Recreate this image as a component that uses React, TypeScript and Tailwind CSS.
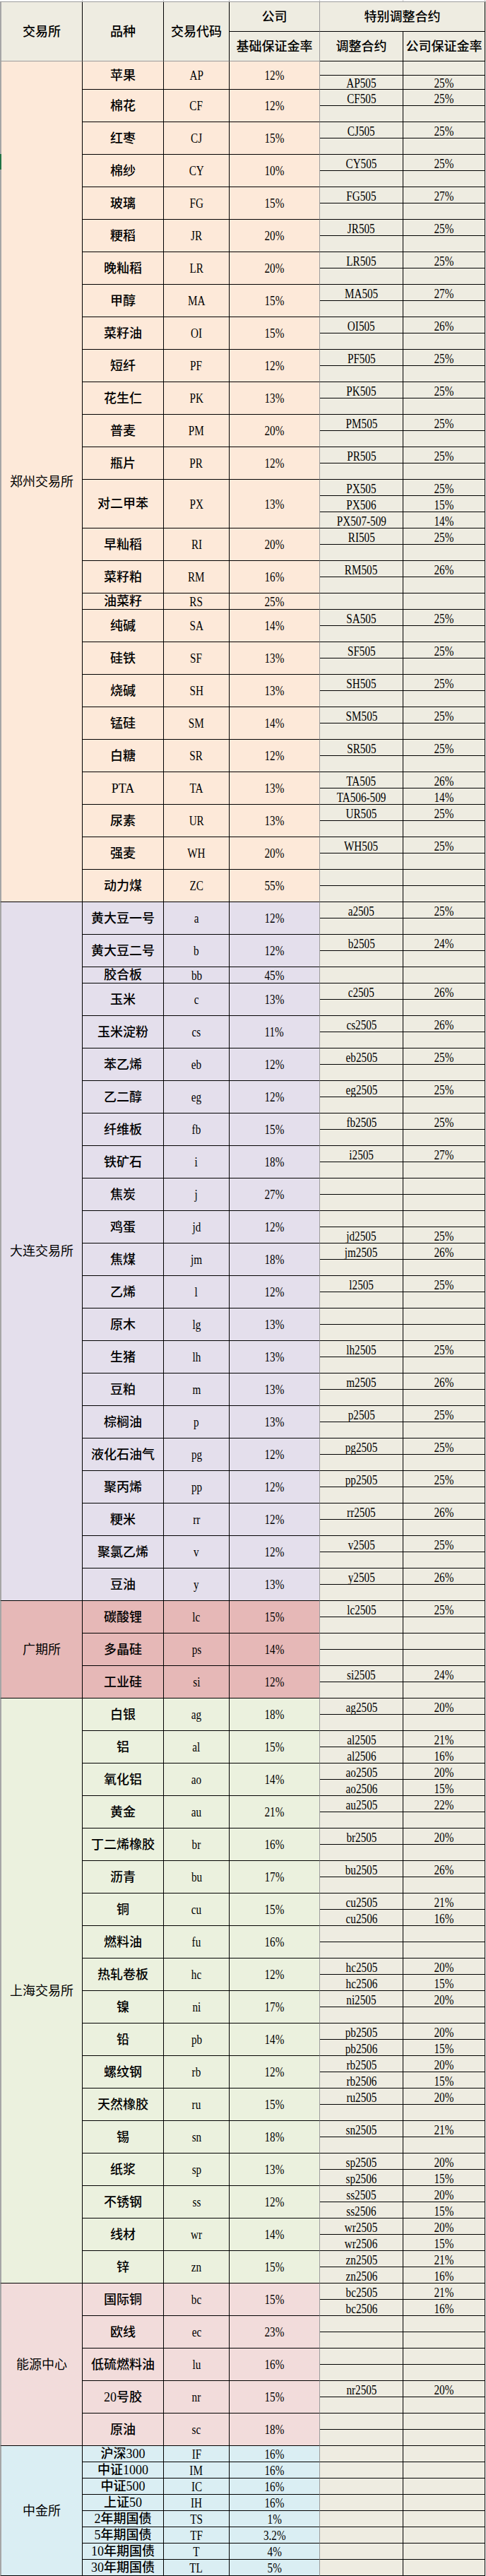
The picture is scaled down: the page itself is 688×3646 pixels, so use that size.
import React from 'react';

type Sub = [string, string] | null;
type Product = { name: string; code: string; rate: string; subs: Sub[]; short?: boolean };
type Group = { label: string; bg: string; products: Product[] };

const p = (name: string, code: string, rate: string, subs: Sub[], short = false): Product => ({
  name,
  code,
  rate,
  subs,
  short,
});

const groups: Group[] = [
  {
    label: '郑州交易所',
    bg: 'bg-[#fde9d9]',
    products: [
      p('苹果', 'AP', '12%', [null, ['AP505', '25%']], true),
      p('棉花', 'CF', '12%', [['CF505', '25%'], null]),
      p('红枣', 'CJ', '15%', [['CJ505', '25%'], null]),
      p('棉纱', 'CY', '10%', [['CY505', '25%'], null]),
      p('玻璃', 'FG', '15%', [['FG505', '27%'], null]),
      p('粳稻', 'JR', '20%', [['JR505', '25%'], null]),
      p('晚籼稻', 'LR', '20%', [['LR505', '25%'], null]),
      p('甲醇', 'MA', '15%', [['MA505', '27%'], null]),
      p('菜籽油', 'OI', '15%', [['OI505', '26%'], null]),
      p('短纤', 'PF', '12%', [['PF505', '25%'], null]),
      p('花生仁', 'PK', '13%', [['PK505', '25%'], null]),
      p('普麦', 'PM', '20%', [['PM505', '25%'], null]),
      p('瓶片', 'PR', '12%', [['PR505', '25%'], null]),
      p('对二甲苯', 'PX', '13%', [['PX505', '25%'], ['PX506', '15%'], ['PX507-509', '14%']]),
      p('早籼稻', 'RI', '20%', [['RI505', '25%'], null]),
      p('菜籽粕', 'RM', '16%', [['RM505', '26%'], null]),
      p('油菜籽', 'RS', '25%', [null]),
      p('纯碱', 'SA', '14%', [['SA505', '25%'], null]),
      p('硅铁', 'SF', '13%', [['SF505', '25%'], null]),
      p('烧碱', 'SH', '13%', [['SH505', '25%'], null]),
      p('锰硅', 'SM', '14%', [['SM505', '25%'], null]),
      p('白糖', 'SR', '12%', [['SR505', '25%'], null]),
      p('PTA', 'TA', '13%', [['TA505', '26%'], ['TA506-509', '14%']]),
      p('尿素', 'UR', '13%', [['UR505', '25%'], null]),
      p('强麦', 'WH', '20%', [['WH505', '25%'], null]),
      p('动力煤', 'ZC', '55%', [null, null]),
    ],
  },
  {
    label: '大连交易所',
    bg: 'bg-[#e4dfec]',
    products: [
      p('黄大豆一号', 'a', '12%', [['a2505', '25%'], null]),
      p('黄大豆二号', 'b', '12%', [['b2505', '24%'], null]),
      p('胶合板', 'bb', '45%', [null]),
      p('玉米', 'c', '13%', [['c2505', '26%'], null]),
      p('玉米淀粉', 'cs', '11%', [['cs2505', '26%'], null]),
      p('苯乙烯', 'eb', '12%', [['eb2505', '25%'], null]),
      p('乙二醇', 'eg', '12%', [['eg2505', '25%'], null]),
      p('纤维板', 'fb', '15%', [['fb2505', '25%'], null]),
      p('铁矿石', 'i', '18%', [['i2505', '27%'], null]),
      p('焦炭', 'j', '27%', [null, null]),
      p('鸡蛋', 'jd', '12%', [null, ['jd2505', '25%']]),
      p('焦煤', 'jm', '18%', [['jm2505', '26%'], null]),
      p('乙烯', 'l', '12%', [['l2505', '25%'], null]),
      p('原木', 'lg', '13%', [null, null]),
      p('生猪', 'lh', '13%', [['lh2505', '25%'], null]),
      p('豆粕', 'm', '13%', [['m2505', '26%'], null]),
      p('棕榈油', 'p', '13%', [['p2505', '25%'], null]),
      p('液化石油气', 'pg', '12%', [['pg2505', '25%'], null]),
      p('聚丙烯', 'pp', '12%', [['pp2505', '25%'], null]),
      p('粳米', 'rr', '12%', [['rr2505', '26%'], null]),
      p('聚氯乙烯', 'v', '12%', [['v2505', '25%'], null]),
      p('豆油', 'y', '13%', [['y2505', '26%'], null]),
    ],
  },
  {
    label: '广期所',
    bg: 'bg-[#e6b8b7]',
    products: [
      p('碳酸锂', 'lc', '15%', [['lc2505', '25%'], null]),
      p('多晶硅', 'ps', '14%', [null, null]),
      p('工业硅', 'si', '12%', [['si2505', '24%'], null]),
    ],
  },
  {
    label: '上海交易所',
    bg: 'bg-[#ebf1de]',
    products: [
      p('白银', 'ag', '18%', [['ag2505', '20%'], null]),
      p('铝', 'al', '15%', [['al2505', '21%'], ['al2506', '16%']]),
      p('氧化铝', 'ao', '14%', [['ao2505', '20%'], ['ao2506', '15%']]),
      p('黄金', 'au', '21%', [['au2505', '22%'], null]),
      p('丁二烯橡胶', 'br', '16%', [['br2505', '20%'], null]),
      p('沥青', 'bu', '17%', [['bu2505', '26%'], null]),
      p('铜', 'cu', '15%', [['cu2505', '21%'], ['cu2506', '16%']]),
      p('燃料油', 'fu', '16%', [null, null]),
      p('热轧卷板', 'hc', '12%', [['hc2505', '20%'], ['hc2506', '15%']]),
      p('镍', 'ni', '17%', [['ni2505', '20%'], null]),
      p('铅', 'pb', '14%', [['pb2505', '20%'], ['pb2506', '15%']]),
      p('螺纹钢', 'rb', '12%', [['rb2505', '20%'], ['rb2506', '15%']]),
      p('天然橡胶', 'ru', '15%', [['ru2505', '20%'], null]),
      p('锡', 'sn', '18%', [['sn2505', '21%'], null]),
      p('纸浆', 'sp', '13%', [['sp2505', '20%'], ['sp2506', '15%']]),
      p('不锈钢', 'ss', '12%', [['ss2505', '20%'], ['ss2506', '15%']]),
      p('线材', 'wr', '14%', [['wr2505', '20%'], ['wr2506', '15%']]),
      p('锌', 'zn', '15%', [['zn2505', '21%'], ['zn2506', '16%']]),
    ],
  },
  {
    label: '能源中心',
    bg: 'bg-[#f2dcdb]',
    products: [
      p('国际铜', 'bc', '15%', [['bc2505', '21%'], ['bc2506', '16%']]),
      p('欧线', 'ec', '23%', [null, null]),
      p('低硫燃料油', 'lu', '16%', [null, null]),
      p('20号胶', 'nr', '15%', [['nr2505', '20%'], null]),
      p('原油', 'sc', '18%', [null, null]),
    ],
  },
  {
    label: '中金所',
    bg: 'bg-[#daeef3]',
    products: [
      p('沪深300', 'IF', '16%', [null]),
      p('中证1000', 'IM', '16%', [null]),
      p('中证500', 'IC', '16%', [null]),
      p('上证50', 'IH', '16%', [null]),
      p('2年期国债', 'TS', '1%', [null]),
      p('5年期国债', 'TF', '3.2%', [null]),
      p('10年期国债', 'T', '4%', [null]),
      p('30年期国债', 'TL', '5%', [null]),
    ],
  },
];

// narrow serif, close to the SimSun half-width glyphs of the sheet
function Narrow({ children }: { children: React.ReactNode }) {
  return <span className="inline-block scale-x-[0.8] text-[19px] leading-[19px]">{children}</span>;
}

function ProductRow({ item, bg }: { item: Product; bg: string }) {
  const rowCls = item.short ? 'h-[20px] pt-[1px]' : 'h-[23px] pt-[3px]';
  return (
    <div className="flex">
      <div className={`${bg} flex w-[115px] shrink-0 items-center justify-center border-r border-b border-black text-[18px] leading-[18px] font-medium`}>
        {item.name}
      </div>
      <div className={`${bg} flex w-[93px] shrink-0 items-center justify-center border-r border-b border-black leading-[19px]`}>
        <Narrow>{item.code}</Narrow>
      </div>
      <div className={`${bg} flex w-[128px] shrink-0 items-center justify-center border-r border-b border-r-[#9c9c9c] border-b-black leading-[19px]`}>
        <Narrow>{item.rate}</Narrow>
      </div>
      <div className="flex flex-col bg-[#eeece1]">
        {item.subs.map((sub, i) => (
          <div key={i} className="flex">
            <div className={`${rowCls} w-[118px] overflow-hidden border-r border-b border-black text-center leading-[19px]`}>
              {sub && <Narrow>{sub[0]}</Narrow>}
            </div>
            <div className={`${rowCls} w-[116px] overflow-hidden border-r border-b border-black text-center leading-[19px]`}>
              {sub && <Narrow>{sub[1]}</Narrow>}
            </div>
          </div>
        ))}
      </div>
    </div>
  );
}

export default function App() {
  return (
    <div className="relative w-[688px] bg-white font-['Liberation_Serif','Noto_Sans_CJK_SC',serif] text-black">
      {/* sheet top edge */}
      <div className="flex h-[2px]">
        <div className="w-[117px] border-r border-[#c8c8c8]" />
        <div className="w-[115px] border-r border-[#c8c8c8]" />
        <div className="w-[93px] border-r border-[#c8c8c8]" />
        <div className="w-[128px] border-r border-[#c8c8c8]" />
        <div className="w-[118px] border-r border-[#c8c8c8]" />
        <div className="w-[116px] border-r border-[#c8c8c8]" />
      </div>

      {/* header */}
      <div className="flex h-[85px] border-t border-[#9c9c9c] bg-[#eeece1] text-[18px] leading-[18px] font-medium">
        <div className="flex w-[117px] items-center justify-center border-l-2 border-r border-b border-l-[#a6a6a6] border-r-black border-b-[#9c9c9c]">
          交易所
        </div>
        <div className="flex w-[115px] items-center justify-center border-r border-b border-r-black border-b-[#9c9c9c]">
          品种
        </div>
        <div className="flex w-[93px] items-center justify-center border-r border-b border-r-black border-b-[#9c9c9c]">
          交易代码
        </div>
        <div className="flex w-[128px] flex-col">
          <div className="flex h-[42px] items-center justify-center border-r border-b border-r-[#9c9c9c] border-b-black">公司</div>
          <div className="flex h-[42px] items-center justify-center border-r border-b border-r-[#9c9c9c] border-b-[#9c9c9c]">
            基础保证金率
          </div>
        </div>
        <div className="flex w-[234px] flex-col">
          <div className="flex h-[42px] items-center justify-center border-r border-b border-black">特别调整合约</div>
          <div className="flex h-[42px]">
            <div className="flex w-[118px] items-center justify-center border-r border-b border-black">调整合约</div>
            <div className="flex w-[116px] items-center justify-center border-r border-b border-black">公司保证金率</div>
          </div>
        </div>
      </div>

      {/* body */}
      {groups.map((g) => (
        <div key={g.label} className="flex">
          <div className={`${g.bg} flex w-[117px] shrink-0 items-center justify-center border-l-2 border-r border-b border-l-[#a6a6a6] border-r-black border-b-black text-[18px] leading-[18px]`}>
            {g.label}
          </div>
          <div className="flex flex-col">
            {g.products.map((item) => (
              <ProductRow key={item.code} item={item} bg={g.bg} />
            ))}
          </div>
        </div>
      ))}

      {/* selected row marker on the sheet edge */}
      <div className="absolute top-[218px] left-0 h-[22px] w-[2px] bg-[#217346]" />
    </div>
  );
}
